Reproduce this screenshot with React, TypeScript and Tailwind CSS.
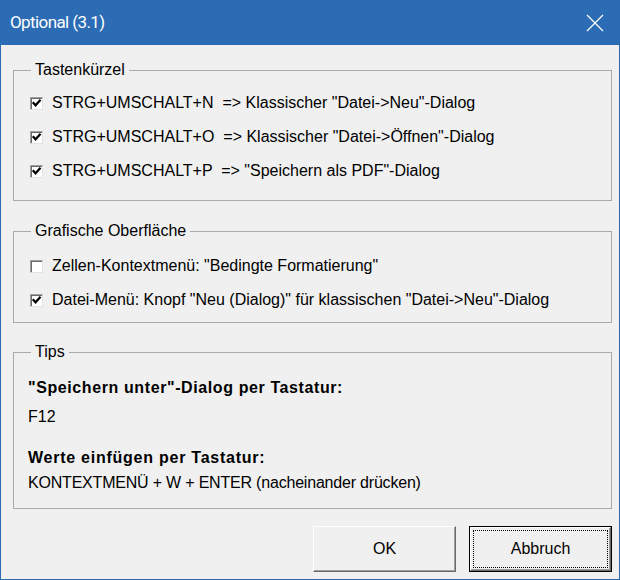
import React from "react";

const body = { fontFamily: '"Liberation Sans", Arial, sans-serif' };

function Check({ checked }: { checked: boolean }) {
  return (
    <div className="w-[13px] h-[13px] shrink-0 bg-white border border-t-[#a0a0a0] border-l-[#a0a0a0] border-r-[#e3e3e3] border-b-[#e3e3e3] shadow-[inset_1px_1px_0_#696969] flex items-center justify-center">
      {checked && (
        <svg width="11" height="11" viewBox="0 0 11 11">
          <polyline points="2.5,5 4.6,7.3 8.8,2.6" fill="none" stroke="#000" strokeWidth="2.2" strokeLinecap="square" />
        </svg>
      )}
    </div>
  );
}

function Row({ checked, children }: { checked: boolean; children: React.ReactNode }) {
  return (
    <div className="h-[34px] flex items-center pl-[16px] gap-[9px]">
      <Check checked={checked} />
      <span className="whitespace-pre">{children}</span>
    </div>
  );
}

function Group({ title, children, className }: { title: string; children: React.ReactNode; className?: string }) {
  return (
    <fieldset className={"border border-[#a9a9a9] " + (className ?? "")}>
      <legend className="ml-[17px] px-[4px] leading-[20px]">{title}</legend>
      {children}
    </fieldset>
  );
}

export default function App() {
  return (
    <div className="w-[620px] h-[580px] bg-[#2b6cb5] flex flex-col px-px pb-px text-black text-[16px]" style={body}>
      <div className="h-[45px] shrink-0 flex items-center justify-between pl-[10px] pr-[16px] -mx-px">
        <span className="text-white text-[17px] leading-none tracking-[-0.6px]" style={{ fontFamily: 'Roboto, "Noto Sans", sans-serif' }}>
          Optional (3.1)
        </span>
        <svg width="18" height="18" viewBox="0 0 18 18">
          <path d="M1 1 L17 17 M17 1 L1 17" stroke="#fff" strokeWidth="1.2" fill="none" />
        </svg>
      </div>
      <div className="flex-1 bg-[#f0f0f0] flex flex-col pt-[15px] pl-[12px] pr-[7px]">
        <Group title="Tastenkürzel">
          <div className="pt-[6px] pb-[12px]">
            <Row checked>{'STRG+UMSCHALT+N  => Klassischer "Datei->Neu"-Dialog'}</Row>
            <Row checked>{'STRG+UMSCHALT+O  => Klassischer "Datei->Öffnen"-Dialog'}</Row>
            <Row checked>{'STRG+UMSCHALT+P  => "Speichern als PDF"-Dialog'}</Row>
          </div>
        </Group>
        <Group title="Grafische Oberfläche" className="mt-[20px]">
          <div className="pt-[8px] pb-[5px]">
            <Row checked={false}>{'Zellen-Kontextmenü: "Bedingte Formatierung"'}</Row>
            <Row checked>{'Datei-Menü: Knopf "Neu (Dialog)" für klassischen "Datei->Neu"-Dialog'}</Row>
          </div>
        </Group>
        <Group title="Tips" className="mt-[19px]">
          <div className="pt-[14px] pb-[13px] pl-[14px] flex flex-col">
            <div className="h-[24px] flex items-center font-bold tracking-[0.6px]">"Speichern unter"-Dialog per Tastatur:</div>
            <div className="h-[24px] mt-[5px] flex items-center">F12</div>
            <div className="h-[24px] mt-[17px] flex items-center font-bold tracking-[0.75px]">Werte einfügen per Tastatur:</div>
            <div className="h-[24px] mt-[1px] flex items-center tracking-[-0.2px]">KONTEXTMENÜ + W + ENTER (nacheinander drücken)</div>
          </div>
        </Group>
        <div className="mt-[17px] flex justify-end gap-[13px]">
          <div className="w-[143px] h-[46px] bg-[#f0f0f0] border border-t-white border-l-white border-r-[#696969] border-b-[#696969] shadow-[inset_-1px_-1px_0_#a0a0a0] flex items-center justify-center">
            OK
          </div>
          <div className="w-[143px] h-[46px] border border-black flex">
            <div className="flex-1 bg-[#f0f0f0] border border-t-white border-l-white border-r-[#696969] border-b-[#696969] shadow-[inset_-1px_-1px_0_#a0a0a0] p-[2px] flex">
              <div className="flex-1 border border-dotted border-black flex items-center justify-center">Abbruch</div>
            </div>
          </div>
        </div>
      </div>
    </div>
  );
}
